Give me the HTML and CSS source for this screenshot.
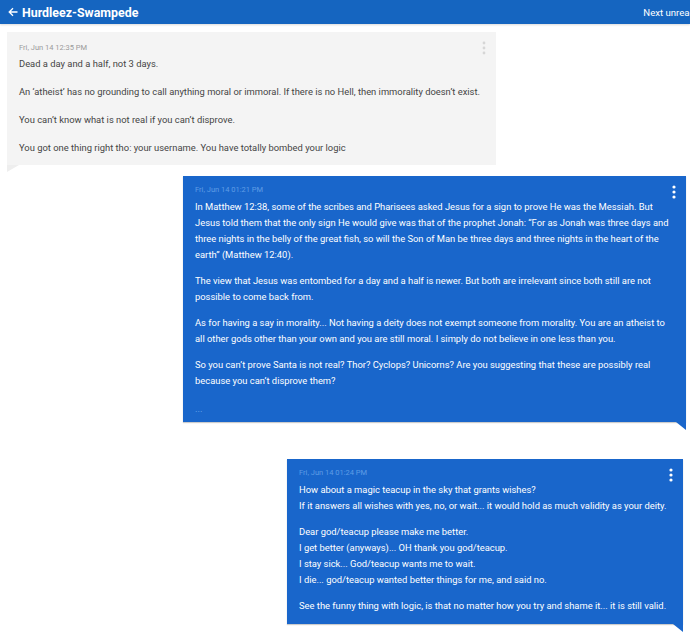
FILE: index.html
```html
<!DOCTYPE html>
<html lang="en">

<head>
  <meta charset="UTF-8">
  <meta name="viewport" content="width=device-width, initial-scale=1.0">
  <title>Hurdleez-Swampede</title>
  <link rel="stylesheet" href="styles.css">
</head>

<body>
  <header class="topbar">
    <div class="topbar-title">
      <svg class="back" width="10" height="10" viewBox="0 0 10 10"><path d="M9.5 5H1.2M5 1.2L1.2 5L5 8.8"/></svg>
      Hurdleez-Swampede
    </div>
    <div class="topbar-next">Next unread</div>
  </header>

  <main class="thread">
    <div class="bubble bubble-in">
      <div class="bubble-date">Fri, Jun 14 12:35 PM</div>
      <svg class="kebab" width="4" height="14" viewBox="0 0 4 14"><circle cx="2" cy="2" r="1.4"/><circle cx="2" cy="7" r="1.4"/><circle cx="2" cy="12" r="1.4"/></svg>
      <p>Dead a day and a half, not 3 days.</p>
      <p>An ‘atheist’ has no grounding to call anything moral or immoral. If there is no Hell, then immorality doesn’t exist.</p>
      <p>You can’t know what is not real if you can’t disprove.</p>
      <p>You got one thing right tho: your username. You have totally bombed your logic</p>
    </div>

    <div class="bubble bubble-out bubble-wide">
      <div class="bubble-date">Fri, Jun 14 01:21 PM</div>
      <svg class="kebab" width="4" height="14" viewBox="0 0 4 14"><circle cx="2" cy="2" r="1.6"/><circle cx="2" cy="7" r="1.6"/><circle cx="2" cy="12" r="1.6"/></svg>
      <p>In Matthew 12:38, some of the scribes and Pharisees asked Jesus for a sign to prove He was the Messiah. But Jesus told them that the only sign He would give was that of the prophet Jonah: “For as Jonah was three days and three nights in the belly of the great fish, so will the Son of Man be three days and three nights in the heart of the earth” (Matthew 12:40).</p>
      <p>The view that Jesus was entombed for a day and a half is newer. But both are irrelevant since both still are not possible to come back from.</p>
      <p>As for having a say in morality... Not having a deity does not exempt someone from morality. You are an atheist to all other gods other than your own and you are still moral. I simply do not believe in one less than you.</p>
      <p>So you can’t prove Santa is not real? Thor? Cyclops? Unicorns? Are you suggesting that these are possibly real because you can’t disprove them?</p>
      <p class="more">...</p>
    </div>

    <div class="bubble bubble-out bubble-narrow">
      <div class="bubble-date">Fri, Jun 14 01:24 PM</div>
      <svg class="kebab" width="4" height="14" viewBox="0 0 4 14"><circle cx="2" cy="2" r="1.6"/><circle cx="2" cy="7" r="1.6"/><circle cx="2" cy="12" r="1.6"/></svg>
      <p>How about a magic teacup in the sky that grants wishes?<br>If it answers all wishes with yes, no, or wait... it would hold as much validity as your deity.</p>
      <p>Dear god/teacup please make me better.<br>I get better (anyways)... OH thank you god/teacup.<br>I stay sick... God/teacup wants me to wait.<br>I die... god/teacup wanted better things for me, and said no.</p>
      <p>See the funny thing with logic, is that no matter how you try and shame it... it is still valid.</p>
    </div>
  </main>
</body>

</html>
```

FILE: styles.css
```css
body {
  margin: 0;
  padding: 0;
  background-color: #ffffff;
  font-family: Roboto, "Liberation Sans", sans-serif;
  overflow-x: hidden;
}

.topbar {
  display: flex;
  justify-content: space-between;
  align-items: center;
  height: 24px;
  background-color: #1565c0;
  color: #ffffff;
  padding-left: 8px;
  box-shadow: 0 1px 2px rgba(0, 0, 0, 0.15);
}

.topbar-title {
  display: flex;
  align-items: center;
  gap: 4px;
  font-size: 12.4px;
  font-weight: bold;
  white-space: nowrap;
}

.back {
  fill: none;
  stroke: #ffffff;
  stroke-width: 1.3;
}

.topbar-next {
  font-size: 9.6px;
  white-space: nowrap;
  margin-right: -5px;
}

.thread {
  display: flex;
  flex-direction: column;
  padding-top: 8px;
  padding-bottom: 20px;
}

.bubble {
  position: relative;
  box-sizing: border-box;
  padding: 11px 12px 10px 12px;
  font-size: 9.4px;
  line-height: 14px;
}

.bubble p {
  margin: 0 0 14px 0;
}

.bubble p:last-of-type {
  margin-bottom: 0;
}

.bubble-date {
  font-size: 7.5px;
  line-height: 10px;
  margin-bottom: 4px;
}

.kebab {
  position: absolute;
  top: 9px;
  right: 10px;
}

/* incoming message */
.bubble-in {
  margin-left: 7px;
  width: 489px;
  min-height: 133px;
  background-color: #f4f4f4;
  color: #454545;
}

.bubble-in .bubble-date {
  color: #9a9a9a;
}

.bubble-in .kebab {
  fill: #d6d6d6;
}

.bubble-in::after {
  content: "";
  position: absolute;
  left: 0;
  bottom: -7px;
  border-top: 7px solid #eeeeee;
  border-right: 12px solid transparent;
}

/* outgoing messages */
.bubble-out {
  background-color: #1966cb;
  color: #ffffff;
  line-height: 16px;
  padding-top: 9px;
  box-shadow: 0 1px 1px rgba(0, 0, 0, 0.2);
}

.bubble-out p {
  margin-bottom: 10px;
}

.bubble-out .bubble-date {
  color: #5f9de6;
  margin-bottom: 4px;
}

.bubble-out .kebab {
  fill: #ffffff;
}

.bubble-out::after {
  content: "";
  position: absolute;
  right: 0;
  bottom: -8px;
  border-top: 8px solid #1966cb;
  border-left: 10px solid transparent;
}

.bubble-wide {
  margin-top: 11px;
  margin-left: 183px;
  width: 503px;
  min-height: 246px;
  padding-bottom: 4px;
}

.bubble-wide .more {
  margin-top: 12px;
  color: #6fa8ec;
}

.bubble-narrow {
  margin-top: 37px;
  margin-left: 287px;
  width: 396px;
  min-height: 161px;
}
```
